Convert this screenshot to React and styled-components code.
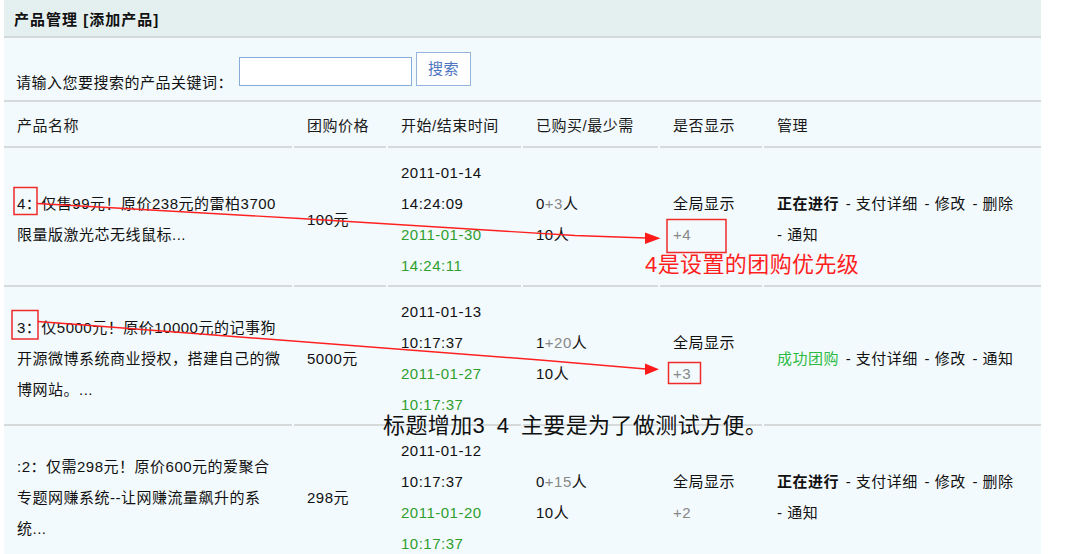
import React from 'react';
import styled, {createGlobalStyle} from 'styled-components';

const FONT = `"Liberation Sans", "Noto Sans CJK SC", sans-serif`;

const GlobalStyle = createGlobalStyle`
  html, body {
    margin: 0;
    padding: 0;
    background: #ffffff;
  }
  body {
    font-family: ${FONT};
    font-size: 15px;
    letter-spacing: 0.5px;
    color: #111;
  }
`;

const products = [
  {
    id: 4,
    name: ['4：仅售99元！原价238元的雷柏3700', '限量版激光芯无线鼠标...'],
    price: '100元',
    start: ['2011-01-14', '14:24:09'],
    end: ['2011-01-30', '14:24:11'],
    bought: '0',
    extra: '+3',
    min: '10',
    order: '+4',
    status: 'running',
    actions: ['支付详细', '修改', '删除', '通知'],
  },
  {
    id: 3,
    name: ['3：仅5000元！原价10000元的记事狗', '开源微博系统商业授权，搭建自己的微', '博网站。...'],
    price: '5000元',
    start: ['2011-01-13', '10:17:37'],
    end: ['2011-01-27', '10:17:37'],
    bought: '1',
    extra: '+20',
    min: '10',
    order: '+3',
    status: 'success',
    actions: ['支付详细', '修改', '通知'],
  },
  {
    id: 2,
    name: [':2：仅需298元！原价600元的爱聚合', '专题网赚系统--让网赚流量飙升的系', '统...'],
    price: '298元',
    start: ['2011-01-12', '10:17:37'],
    end: ['2011-01-20', '10:17:37'],
    bought: '0',
    extra: '+15',
    min: '10',
    order: '+2',
    status: 'running',
    actions: ['支付详细', '修改', '删除', '通知'],
  },
];

const App = () => {
  return <Wrapper>
    <GlobalStyle/>
    <Page>
      <TitleBar>产品管理 [添加产品]</TitleBar>
      <SearchRow>
        <SearchLabel>请输入您要搜索的产品关键词：</SearchLabel>
        <SearchInput type="text"/>
        <SearchButton type="button">搜索</SearchButton>
      </SearchRow>
      <Row>
        <HeadCell>产品名称</HeadCell>
        <HeadCell>团购价格</HeadCell>
        <HeadCell>开始/结束时间</HeadCell>
        <HeadCell>已购买/最少需</HeadCell>
        <HeadCell>是否显示</HeadCell>
        <HeadCell>管理</HeadCell>
      </Row>
      {products.map(p => (
        <Row key={p.id}>
          <Cell>
            {p.name.map(line => <Line key={line}>{line}</Line>)}
          </Cell>
          <Cell>{p.price}</Cell>
          <Cell>
            {p.start.map(t => <Line key={t}>{t}</Line>)}
            {p.end.map(t => <Line key={t} green>{t}</Line>)}
          </Cell>
          <Cell>
            <Line>{p.bought}<Muted>{p.extra}</Muted>人</Line>
            <Line>{p.min}人</Line>
          </Cell>
          <Cell>
            <Line>全局显示</Line>
            <Line><Muted>{p.order}</Muted></Line>
          </Cell>
          <ManageCell>
            <div>
              {p.status === 'running'
                ? <Status>正在进行</Status>
                : <Status success>成功团购</Status>}
              {p.actions.map(a => <React.Fragment key={a}> <Action>- {a}</Action></React.Fragment>)}
            </div>
          </ManageCell>
        </Row>
      ))}
    </Page>

    <Overlay>
      <svg width="1079" height="554" viewBox="0 0 1079 554">
        <g fill="none" stroke="#ee2b2b" strokeWidth="1.5">
          <rect x="14" y="187.5" width="23" height="27"/>
          <rect x="12" y="310.5" width="26" height="28.5"/>
          <rect x="667" y="219.5" width="59" height="33"/>
          <rect x="668.5" y="362.5" width="32" height="21"/>
        </g>
        <g stroke="#ff2020" strokeWidth="1.4" fill="none">
          <polyline points="37,203.5 300,218.5 575,235.5 646,238"/>
          <polyline points="38,321.5 540,360 646,369"/>
        </g>
        <g fill="#ff1a1a">
          <polygon points="645,232.5 660.5,238.3 645,244"/>
          <polygon points="645,363.5 659,369.3 645,375"/>
        </g>
      </svg>
      <Note red left={645} top={254}>4是设置的团购优先级</Note>
      <Note left={383} top={415}>标题增加3 4 主要是为了做测试方便。</Note>
    </Overlay>
  </Wrapper>
};

const Wrapper = styled.div`
  position: relative;
  width: 1079px;
  min-height: 554px;
  overflow: hidden;
`

const Page = styled.div`
  margin-left: 4px;
  width: 1037px;
  background: #f3fafd;
`

const TitleBar = styled.div`
  height: 36px;
  display: flex;
  align-items: center;
  padding-left: 10px;
  background: #e4efef;
  border-bottom: 2px solid #d3d8d8;
  font-weight: bold;
  letter-spacing: 1px;
  color: #111;
`

const SearchRow = styled.div`
  display: flex;
  align-items: flex-end;
  padding: 14px 12px;
  border-bottom: 2px solid #d6dada;
`

const SearchLabel = styled.span`
  line-height: 20px;
  margin-bottom: -7px;
  margin-right: 6px;
  color: #111;
`

const SearchInput = styled.input`
  box-sizing: border-box;
  width: 173px;
  height: 29px;
  margin: 0;
  padding: 0 4px;
  border: 1.5px solid #86acd9;
  background: #fff;
  outline: none;
`

const SearchButton = styled.button`
  box-sizing: border-box;
  width: 55px;
  height: 34px;
  margin: 0 0 0 4px;
  padding: 0 0 4px;
  background: #fff;
  border: 1.5px solid #94b4dc;
  color: #4d74bf;
  font-family: ${FONT};
  font-size: 15px;
  letter-spacing: 0.5px;
`

const Row = styled.div`
  display: grid;
  grid-template-columns: 288px 92px 133px 135px 102px 1fr;
  column-gap: 2px;
`

const HeadCell = styled.div`
  height: 44px;
  display: flex;
  align-items: center;
  padding-left: 13px;
  border-bottom: 2px solid #d6dada;
  color: #1a1a1a;
`

const Cell = styled.div`
  display: flex;
  flex-direction: column;
  justify-content: center;
  padding: 9px 0 4px 13px;
  line-height: 31px;
  border-bottom: 2px solid #d6dada;
  white-space: nowrap;
`

const ManageCell = styled(Cell)`
  white-space: normal;
  padding-right: 8px;
  word-spacing: 2px;
`

const Line = styled.div`
  color: ${props => props.green ? '#2f9e2f' : '#111'};
`

const Muted = styled.span`
  color: #888;
`

const Status = styled.b`
  color: ${props => props.success ? '#2bbb44' : '#111'};
  font-weight: ${props => props.success ? 'normal' : 'bold'};
`

const Action = styled.span`
  white-space: nowrap;
  word-spacing: 0;
`

const Overlay = styled.div`
  position: absolute;
  left: 0;
  top: 0;
  width: 1079px;
  height: 554px;
  pointer-events: none;
  svg {
    position: absolute;
    left: 0;
    top: 0;
  }
`

const Note = styled.div`
  position: absolute;
  left: ${props => props.left}px;
  top: ${props => props.top}px;
  font-family: "Liberation Sans", "Noto Sans CJK SC", sans-serif;
  font-size: 22px;
  line-height: 22px;
  letter-spacing: 0.4px;
  word-spacing: 5px;
  white-space: pre;
  color: ${props => props.red ? '#ff1f1f' : '#111'};
`

export default App;
